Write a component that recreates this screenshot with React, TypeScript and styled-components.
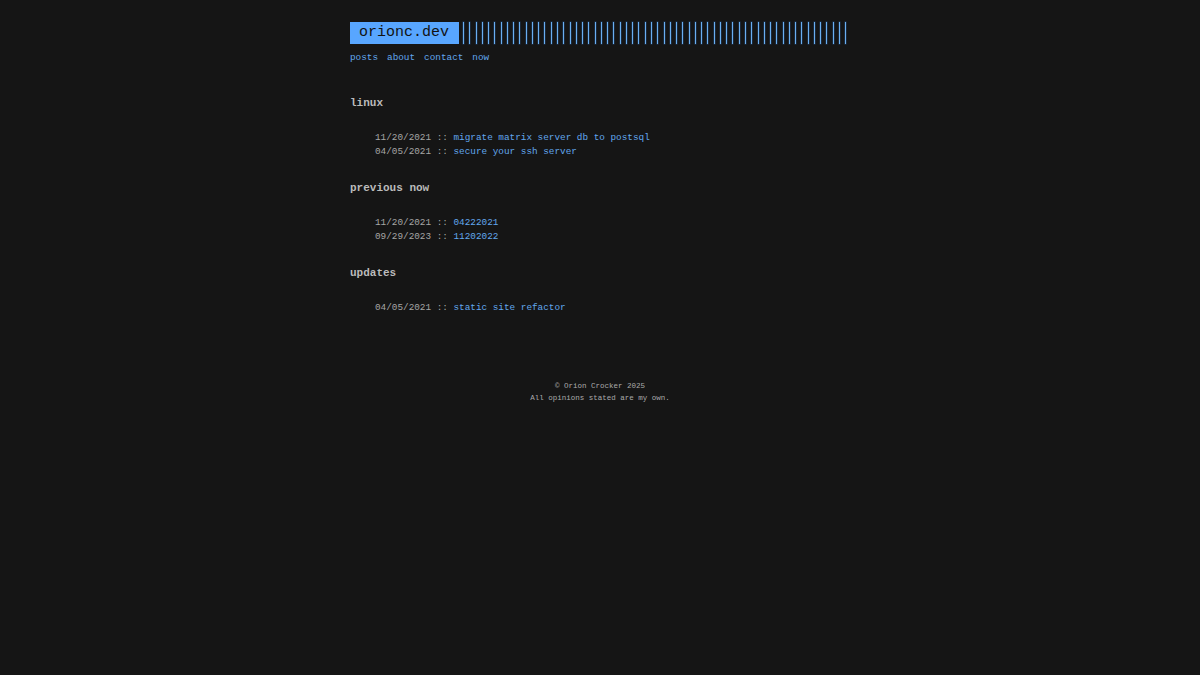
import React from "react";
import styled, { createGlobalStyle } from "styled-components";

const Global = createGlobalStyle`
  html, body { margin: 0; padding: 0; background: #151515; }
  body { font-family: "Liberation Mono", "DejaVu Sans Mono", monospace; color: #aaaaaa; }
  a { text-decoration: none; }
`;

const Page = styled.div`
  width: 500px;
  margin: 0 auto;
  padding-top: 22px;
  font-size: 11px;
`;

const Header = styled.header`
  display: flex;
  align-items: stretch;
  height: 22px;
  gap: 4px;
`;

const Title = styled.a`
  display: flex;
  align-items: center;
  background: #58a6ff;
  color: #121212;
  font-size: 15px;
  padding: 0 10px 0 9px;
  line-height: 22px;
`;

const Bars = styled.div`
  flex: 1;
  display: flex;
  justify-content: space-between;
  margin-right: 3px;
`;

const Bar = styled.span`
  width: 1px;
  background: #6aaef0;
  box-shadow: 0 0 0 0.5px rgba(40, 90, 150, 0.6);
`;

const Nav = styled.nav`
  display: flex;
  gap: 9px;
  margin-top: 7px;
  font-size: 9.35px;
  line-height: 14px;
`;

const Link = styled.a`
  color: #62a8ee;
`;

const Main = styled.main`
  padding-top: 9px;
`;

const Section = styled.section`
  margin-top: 22px;
`;

const Heading = styled.h2`
  margin: 0;
  font-size: 11px;
  line-height: 14px;
  font-weight: bold;
  color: #bbbbbb;
`;

const List = styled.ul`
  list-style: none;
  margin: 21px 0 0;
  padding: 0 0 0 25px;
  font-size: 9.35px;
  line-height: 14px;
`;

const Item = styled.li`
  white-space: pre;
  color: #a6a6a6;
`;

const Footer = styled.footer`
  margin-top: 66px;
  text-align: center;
  font-size: 7.5px;
  line-height: 11.5px;
  color: #aaaaaa;
`;

type Post = { date: string; title: string };

const sections: { name: string; posts: Post[] }[] = [
  {
    name: "linux",
    posts: [
      { date: "11/20/2021", title: "migrate matrix server db to postsql" },
      { date: "04/05/2021", title: "secure your ssh server" },
    ],
  },
  {
    name: "previous now",
    posts: [
      { date: "11/20/2021", title: "04222021" },
      { date: "09/29/2023", title: "11202022" },
    ],
  },
  {
    name: "updates",
    posts: [{ date: "04/05/2021", title: "static site refactor" }],
  },
];

const bars = Array.from({ length: 62 }, (_, i) => i);

export default function App() {
  return (
    <>
      <Global />
      <Page>
        <Header>
          <Title href="#">orionc.dev</Title>
          <Bars>
            {bars.map((i) => (
              <Bar key={i} />
            ))}
          </Bars>
        </Header>
        <Nav>
          <Link href="#">posts</Link>
          <Link href="#">about</Link>
          <Link href="#">contact</Link>
          <Link href="#">now</Link>
        </Nav>
        <Main>
          {sections.map((s) => (
            <Section key={s.name}>
              <Heading>{s.name}</Heading>
              <List>
                {s.posts.map((p) => (
                  <Item key={p.date + p.title}>
                    {p.date} :: <Link href="#">{p.title}</Link>
                  </Item>
                ))}
              </List>
            </Section>
          ))}
        </Main>
        <Footer>
          <div>© Orion Crocker 2025</div>
          <div>All opinions stated are my own.</div>
        </Footer>
      </Page>
    </>
  );
}
